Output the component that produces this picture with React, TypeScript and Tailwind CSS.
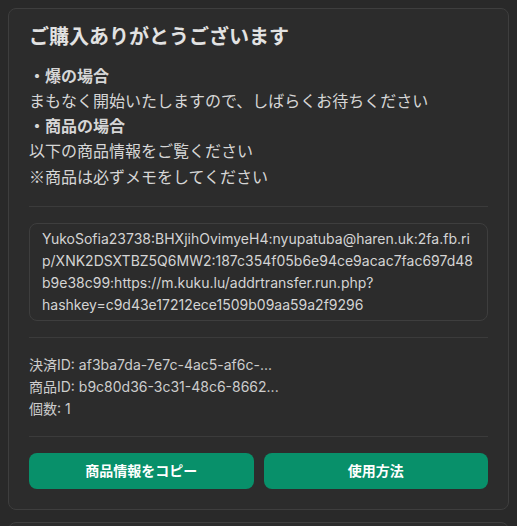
import React from "react";

const FONT = { fontFamily: 'Inter, "Noto Sans CJK JP", sans-serif' };
const CJK = { fontFamily: '"Noto Sans CJK JP", sans-serif' };

const productInfo =
  "YukoSofia23738:BHXjihOvimyeH4:nyupatuba@haren.uk:2fa.fb.rip/XNK2DSXTBZ5Q6MW2:187c354f05b6e94ce9acac7fac697d48b9e38c99:https://m.kuku.lu/addrtransfer.run.php?hashkey=c9d43e17212ece1509b09aa59a2f9296";

function Divider() {
  return <div className="my-4 h-px bg-[#3b3b3b]" />;
}

export default function App() {
  return (
    <div className="min-h-screen bg-[#292929] p-2" style={FONT}>
      <div className="rounded-lg border border-[#3e3e3e] bg-[#2c2c2c] px-5 pt-3.5 pb-5">
        <h2 className="text-xl font-bold leading-7 text-[#e2e2e2]">ご購入ありがとうございます</h2>

        <div className="mt-[13px] text-base leading-[25px] text-[#d6d6d6]">
          <p className="font-bold">・爆の場合</p>
          <p>まもなく開始いたしますので、しばらくお待ちください</p>
          <p className="font-bold">・商品の場合</p>
          <p>以下の商品情報をご覧ください</p>
          <p>
            <span style={CJK}>※</span>商品は必ずメモをしてください
          </p>
        </div>

        <Divider />

        <div className="rounded-lg border border-[#3e3e3e] px-3 py-1 text-sm leading-[22px] break-words text-[#d4d4d4]">
          {productInfo}
        </div>

        <Divider />

        <div className="text-sm leading-[22px] text-[#cdcdcd]">
          <p>決済ID: af3ba7da-7e7c-4ac5-af6c-...</p>
          <p>商品ID: b9c80d36-3c31-48c6-8662...</p>
          <p>個数: 1</p>
        </div>

        <Divider />

        <div className="grid grid-cols-2 gap-2.5">
          <button className="h-9 rounded-lg bg-[#08906a] text-sm font-bold text-white">商品情報をコピー</button>
          <button className="h-9 rounded-lg bg-[#08906a] text-sm font-bold text-white">使用方法</button>
        </div>
      </div>

      <div className="mt-3 h-40 rounded-lg border border-[#3e3e3e] bg-[#2c2c2c]" />
    </div>
  );
}
